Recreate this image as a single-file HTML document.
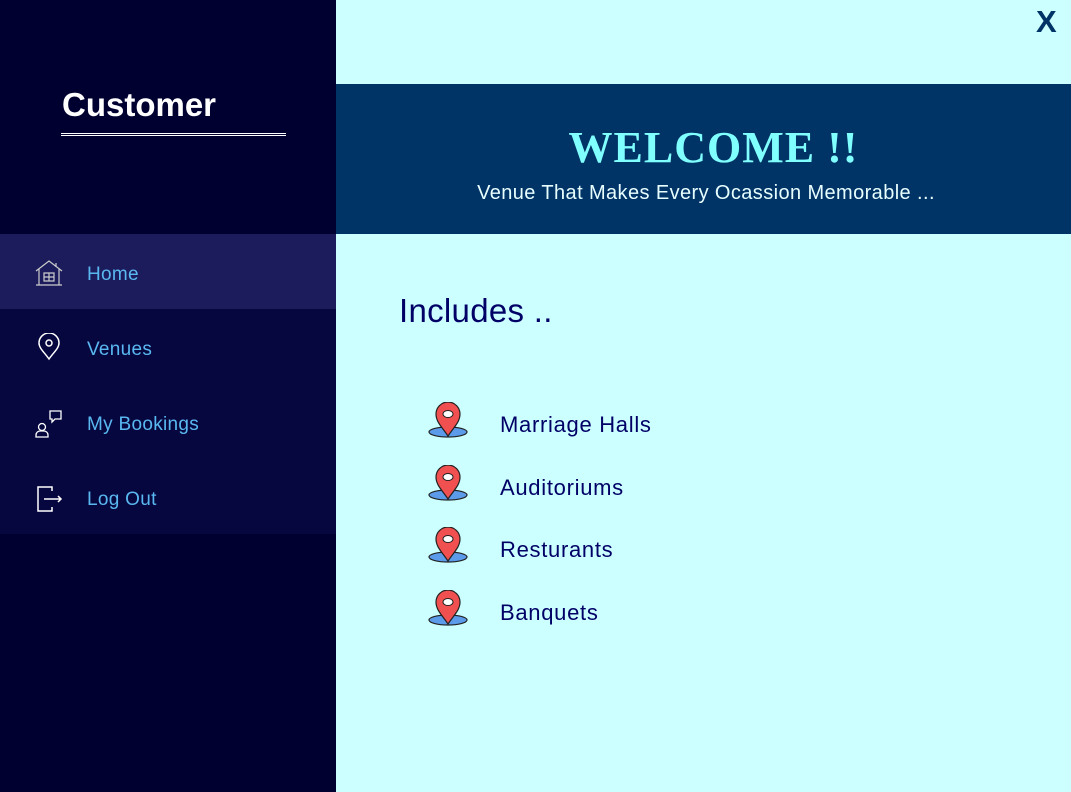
<!DOCTYPE html><html><head><style>
body{margin:0;width:1071px;height:792px;position:relative;background:#ccffff;font-family:"Liberation Sans",sans-serif;overflow:hidden}
.side{position:absolute;left:0;top:0;width:336px;height:792px;background:#000030}
.menu{position:absolute;left:0;top:234px;width:336px;height:300px;background:#070740}
.row{position:absolute;left:0;width:336px;height:75px}
.row span{position:absolute;left:87px;top:30px;font-size:19px;color:#5ab8f0;letter-spacing:.3px}
.row svg{position:absolute;left:34px;top:24px}
.pin{position:absolute;left:428px}
.it{position:absolute;left:500px;font-size:22px;color:#000066;letter-spacing:.7px}
</style></head><body>
<div class="side">
<div style="position:absolute;left:62px;top:86px;font-size:33px;font-weight:bold;color:#fff">Customer</div>
<div style="position:absolute;left:61px;top:133px;width:225px;height:1px;border-top:1px solid #fff;border-bottom:1px solid #fff"></div>
<div class="menu">
<div class="row" style="top:0;background:#1c1c5c"><svg width="30" height="30" viewBox="0 0 30 30" fill="none" stroke="#ccc" stroke-width="1.2"><path d="M2 13L15 3L28 13M5 11V27H25V11M10 15h10v8H10zM15 15v8M10 19h10M2 27h26M22 5v4"/></svg><span>Home</span></div>
<div class="row" style="top:75px"><svg width="30" height="30" viewBox="0 0 30 30" fill="none" stroke="#fff" stroke-width="1.5"><path d="M15 26C10 19 5 15 5 10a10 10 0 0 1 20 0c0 5-5 9-10 16z"/><circle cx="15" cy="10" r="3"/></svg><span>Venues</span></div>
<div class="row" style="top:150px"><svg width="32" height="32" viewBox="0 0 32 32" fill="none" stroke="#fff" stroke-width="1.3"><circle cx="8" cy="19" r="3.5"/><path d="M2 29v-2a4 4 0 0 1 4-4h4a4 4 0 0 1 4 4v2zM16 3h11v8h-6l-3 3v-3h-2z"/></svg><span>My Bookings</span></div>
<div class="row" style="top:225px"><svg width="32" height="32" viewBox="0 0 32 32" fill="none" stroke="#fff" stroke-width="1.5"><path d="M18 8V4H4v24h14v-4M10 16h17M24 13l3 3-3 3"/></svg><span>Log Out</span></div>
</div></div>
<div style="position:absolute;left:336px;top:84px;width:735px;height:150px;background:#003366"></div>
<div style="position:absolute;left:336px;top:122px;width:755px;text-align:center;font-family:'Liberation Serif',serif;font-weight:bold;font-size:44px;color:#80ffff;letter-spacing:1px">WELCOME !!</div>
<div style="position:absolute;left:336px;top:182px;width:740px;text-align:center;font-size:20px;letter-spacing:.4px;color:#e8ffff">Venue That Makes Every Ocassion Memorable ...</div>
<div style="position:absolute;left:1036px;top:4px;font-size:31px;font-weight:bold;color:#003366">X</div>
<div style="position:absolute;left:399px;top:292px;font-size:33px;color:#000066;letter-spacing:.3px">Includes ..</div>
<svg width="0" height="0"><defs><g id="p"><ellipse cx="20" cy="30" rx="19" ry="5" fill="#5b9bea" stroke="#222" stroke-width="1.2"/><path d="M20 34C14 25 8 20 8 12a12 12 0 0 1 24 0c0 8-6 13-12 22z" fill="#f05050" stroke="#222" stroke-width="1.2"/><ellipse cx="20" cy="12" rx="5" ry="3.5" fill="#fff" stroke="#222"/></g></defs></svg>
<svg class="pin" style="top:402px" width="42" height="38"><use href="#p"/></svg>
<svg class="pin" style="top:465px" width="42" height="38"><use href="#p"/></svg>
<svg class="pin" style="top:527px" width="42" height="38"><use href="#p"/></svg>
<svg class="pin" style="top:590px" width="42" height="38"><use href="#p"/></svg>
<div class="it" style="top:412px">Marriage Halls</div>
<div class="it" style="top:475px">Auditoriums</div>
<div class="it" style="top:537px">Resturants</div>
<div class="it" style="top:600px">Banquets</div>
</body></html>
